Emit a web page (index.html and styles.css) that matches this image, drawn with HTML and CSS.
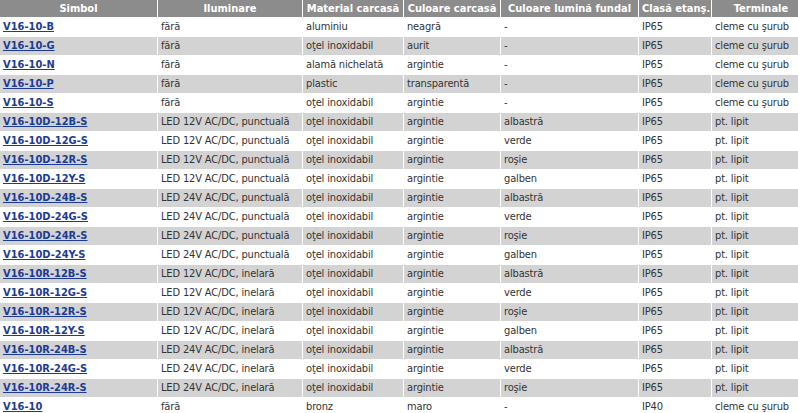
FILE: index.html
```html
<!DOCTYPE html>
<html lang="ro">
<head>
<meta charset="utf-8">
<title>Simboluri</title>
<link rel="stylesheet" href="styles.css">
</head>
<body>
<table class="grid">
  <colgroup>
    <col class="c1"><col class="c2"><col class="c3"><col class="c4"><col class="c5"><col class="c6"><col class="c7">
  </colgroup>
  <thead>
    <tr><th>Simbol</th><th>Iluminare</th><th>Material carcasă</th><th>Culoare carcasă</th><th>Culoare lumină fundal</th><th>Clasă etanş.</th><th>Terminale</th></tr>
  </thead>
  <tbody>
    <tr><td><a href="#">V16-10-B</a></td><td>fără</td><td>aluminiu</td><td>neagră</td><td>-</td><td>IP65</td><td>cleme cu şurub</td></tr>
    <tr class="alt"><td><a href="#">V16-10-G</a></td><td>fără</td><td>oţel inoxidabil</td><td>aurit</td><td>-</td><td>IP65</td><td>cleme cu şurub</td></tr>
    <tr><td><a href="#">V16-10-N</a></td><td>fără</td><td>alamă nichelată</td><td>argintie</td><td>-</td><td>IP65</td><td>cleme cu şurub</td></tr>
    <tr class="alt"><td><a href="#">V16-10-P</a></td><td>fără</td><td>plastic</td><td>transparentă</td><td>-</td><td>IP65</td><td>cleme cu şurub</td></tr>
    <tr><td><a href="#">V16-10-S</a></td><td>fără</td><td>oţel inoxidabil</td><td>argintie</td><td>-</td><td>IP65</td><td>cleme cu şurub</td></tr>
    <tr class="alt"><td><a href="#">V16-10D-12B-S</a></td><td>LED 12V AC/DC, punctuală</td><td>oţel inoxidabil</td><td>argintie</td><td>albastră</td><td>IP65</td><td>pt. lipit</td></tr>
    <tr><td><a href="#">V16-10D-12G-S</a></td><td>LED 12V AC/DC, punctuală</td><td>oţel inoxidabil</td><td>argintie</td><td>verde</td><td>IP65</td><td>pt. lipit</td></tr>
    <tr class="alt"><td><a href="#">V16-10D-12R-S</a></td><td>LED 12V AC/DC, punctuală</td><td>oţel inoxidabil</td><td>argintie</td><td>roşie</td><td>IP65</td><td>pt. lipit</td></tr>
    <tr><td><a href="#">V16-10D-12Y-S</a></td><td>LED 12V AC/DC, punctuală</td><td>oţel inoxidabil</td><td>argintie</td><td>galben</td><td>IP65</td><td>pt. lipit</td></tr>
    <tr class="alt"><td><a href="#">V16-10D-24B-S</a></td><td>LED 24V AC/DC, punctuală</td><td>oţel inoxidabil</td><td>argintie</td><td>albastră</td><td>IP65</td><td>pt. lipit</td></tr>
    <tr><td><a href="#">V16-10D-24G-S</a></td><td>LED 24V AC/DC, punctuală</td><td>oţel inoxidabil</td><td>argintie</td><td>verde</td><td>IP65</td><td>pt. lipit</td></tr>
    <tr class="alt"><td><a href="#">V16-10D-24R-S</a></td><td>LED 24V AC/DC, punctuală</td><td>oţel inoxidabil</td><td>argintie</td><td>roşie</td><td>IP65</td><td>pt. lipit</td></tr>
    <tr><td><a href="#">V16-10D-24Y-S</a></td><td>LED 24V AC/DC, punctuală</td><td>oţel inoxidabil</td><td>argintie</td><td>galben</td><td>IP65</td><td>pt. lipit</td></tr>
    <tr class="alt"><td><a href="#">V16-10R-12B-S</a></td><td>LED 12V AC/DC, inelară</td><td>oţel inoxidabil</td><td>argintie</td><td>albastră</td><td>IP65</td><td>pt. lipit</td></tr>
    <tr><td><a href="#">V16-10R-12G-S</a></td><td>LED 12V AC/DC, inelară</td><td>oţel inoxidabil</td><td>argintie</td><td>verde</td><td>IP65</td><td>pt. lipit</td></tr>
    <tr class="alt"><td><a href="#">V16-10R-12R-S</a></td><td>LED 12V AC/DC, inelară</td><td>oţel inoxidabil</td><td>argintie</td><td>roşie</td><td>IP65</td><td>pt. lipit</td></tr>
    <tr><td><a href="#">V16-10R-12Y-S</a></td><td>LED 12V AC/DC, inelară</td><td>oţel inoxidabil</td><td>argintie</td><td>galben</td><td>IP65</td><td>pt. lipit</td></tr>
    <tr class="alt"><td><a href="#">V16-10R-24B-S</a></td><td>LED 24V AC/DC, inelară</td><td>oţel inoxidabil</td><td>argintie</td><td>albastră</td><td>IP65</td><td>pt. lipit</td></tr>
    <tr><td><a href="#">V16-10R-24G-S</a></td><td>LED 24V AC/DC, inelară</td><td>oţel inoxidabil</td><td>argintie</td><td>verde</td><td>IP65</td><td>pt. lipit</td></tr>
    <tr class="alt"><td><a href="#">V16-10R-24R-S</a></td><td>LED 24V AC/DC, inelară</td><td>oţel inoxidabil</td><td>argintie</td><td>roşie</td><td>IP65</td><td>pt. lipit</td></tr>
    <tr><td><a href="#">V16-10</a></td><td>fără</td><td>bronz</td><td>maro</td><td>-</td><td>IP40</td><td>cleme cu şurub</td></tr>
  </tbody>
</table>
</body>
</html>
```
FILE: styles.css
```css
html, body {
  margin: 0;
  padding: 0;
  overflow: hidden;
  background: #ffffff;
}

.grid {
  table-layout: fixed;
  border-collapse: separate;
  border-spacing: 1px;
  margin: -1px 0 0 -1px;
  width: 812px;
  font-family: "DejaVu Sans Condensed", "DejaVu Sans", sans-serif;
  font-stretch: condensed;
  font-size: 11px;
  letter-spacing: -0.15px;
  color: #333333;
}

.c1 { width: 157px; }
.c2 { width: 144px; }
.c3 { width: 100px; }
.c4 { width: 96px; }
.c5 { width: 137px; }
.c6 { width: 72px; }
.c7 { width: 98px; }

.grid th {
  background: #8c8c8c;
  color: #ffffff;
  font-weight: bold;
  letter-spacing: 0;
  text-align: center;
  height: 17px;
  line-height: 17px;
  padding: 0 3px;
  white-space: nowrap;
  overflow: hidden;
}

.grid td {
  height: 18px;
  line-height: 18px;
  padding: 0 3px;
  text-align: left;
  white-space: nowrap;
  overflow: hidden;
  background: #ffffff;
}

.grid tr.alt td {
  background: #d3d3d3;
}

.grid a {
  color: #1c3c94;
  font-weight: bold;
  font-family: "DejaVu Sans Condensed", "DejaVu Sans", sans-serif;
  font-stretch: condensed;
  font-size: 11px;
  letter-spacing: 0;
  text-decoration: underline;
}
```
